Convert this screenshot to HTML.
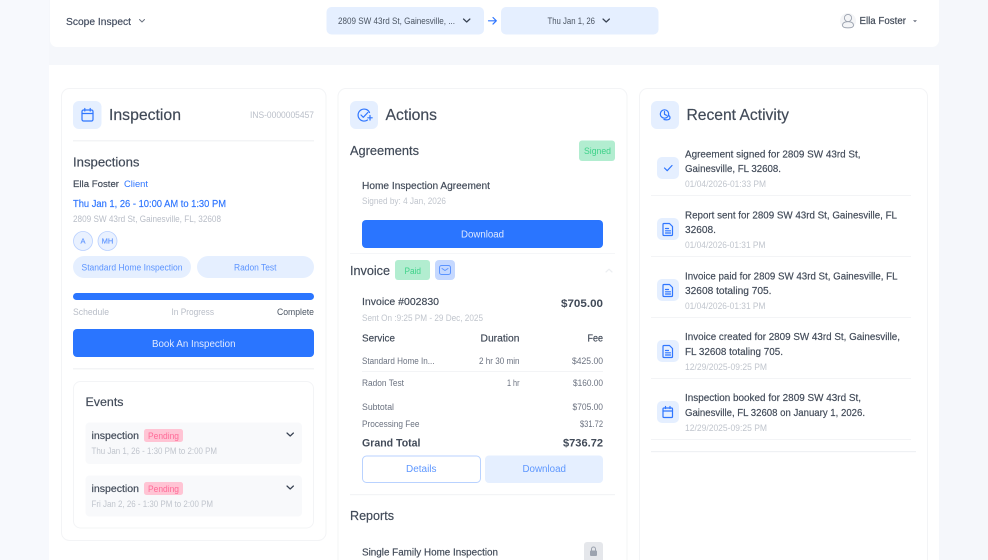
<!DOCTYPE html>
<html lang="en">
<head>
<meta charset="utf-8">
<title>Scope Inspect</title>
<style>
html,body{margin:0;padding:0;width:988px;height:560px;overflow:hidden;background:#f5f7fb}
svg{display:block;filter:blur(.3px)}
text{font-family:"Liberation Sans",sans-serif;white-space:pre}
.m{stroke-width:.18px}
.d{fill:#414a58;stroke:#414a58}
.g{fill:#c0c5cd}
.s{fill:#6b7280}
.b{fill:#2f76ff}
.i{fill:none;stroke:#2f76ff;stroke-width:1.2;stroke-linecap:round;stroke-linejoin:round}
.c{fill:none;stroke:#374151;stroke-width:1.2;stroke-linecap:round;stroke-linejoin:round}
</style>
</head>
<body>
<svg width="988" height="560" viewBox="0 0 988 560" xmlns="http://www.w3.org/2000/svg">
<rect width="988" height="560" fill="#f5f7fb"/>
<rect x="0" y="0" width="49" height="560" fill="#f7f9fd"/>
<rect x="50" y="-10" width="889" height="57" rx="7" fill="#fff"/>
<rect x="49" y="65" width="890" height="495" fill="#fff"/>

<!-- Top bar -->
<text x="66" y="25" font-size="10.5" class="m" fill="#414b5e" stroke="#414b5e" textLength="65" lengthAdjust="spacingAndGlyphs">Scope Inspect</text>
<path d="M139.5 19.5l2.500 2.500 2.500-2.500" fill="none" stroke="#6b7280" stroke-width="1" stroke-linecap="round" stroke-linejoin="round"/>
<rect x="326.5" y="7" width="157.500" height="27.500" rx="5" fill="#e5efff"/>
<text x="338" y="24" font-size="9.5" fill="#4b5563" textLength="117" lengthAdjust="spacingAndGlyphs">2809 SW 43rd St, Gainesville, ...</text>
<path d="M463.500 19l3.200 3 3.200-3" class="c"/>
<path d="M488.500 20.800h7.500M493 17.500l3.300 3.300-3.300 3.300" class="i"/>
<rect x="501" y="7" width="157.500" height="27.500" rx="5" fill="#e5efff"/>
<text x="547.500" y="24" font-size="9.500" fill="#4b5563" textLength="47.500" lengthAdjust="spacingAndGlyphs">Thu Jan 1, 26</text>
<path d="M603 19l3.200 3 3.200-3" class="c"/>
<circle cx="848" cy="21" r="8" fill="#f4f5f7"/>
<circle cx="848" cy="18" r="3.600" fill="none" stroke="#9ca3af" stroke-width=".9"/>
<path d="M842.500 25.500c0-2.600 2.400-3.800 5.500-3.800s5.500 1.200 5.500 3.800c0 1.800-2.400 2.300-5.500 2.300s-5.500-.5-5.500-2.300z" fill="none" stroke="#9ca3af" stroke-width=".9"/>
<text x="859.500" y="24" font-size="10" class="m d" textLength="46.500" lengthAdjust="spacingAndGlyphs">Ella Foster</text>
<path d="M913 20.300h4l-2 2z" fill="#6b7280"/>

<!-- Cards -->
<rect x="61.500" y="88.500" width="264.500" height="452" rx="8" fill="#fff" stroke="#f3f4f6"/>
<rect x="338" y="88.500" width="289" height="490" rx="8" fill="#fff" stroke="#f3f4f6"/>
<rect x="639.500" y="88.500" width="288" height="490" rx="8" fill="#fff" stroke="#f3f4f6"/>

<!-- Card 1 -->
<rect x="73" y="101" width="28.500" height="28" rx="6" fill="#e5efff"/>
<rect x="82" y="110" width="11" height="11" rx="1.500" class="i"/>
<path d="M82 113.500h11M84.800 108.500v2.500M90.200 108.500v2.500" class="i"/>
<text x="109" y="120" font-size="16" class="m" fill="#414a58" stroke="#414a58" textLength="72" lengthAdjust="spacingAndGlyphs">Inspection</text>
<text x="250" y="118" font-size="9" fill="#b9bec8" textLength="64" lengthAdjust="spacingAndGlyphs">INS-0000005457</text>
<rect x="73" y="140" width="241" height="1.500" fill="#f3f4f6"/>
<text x="73" y="166.500" font-size="12.500" class="m d" textLength="66.500" lengthAdjust="spacingAndGlyphs">Inspections</text>
<text x="73" y="187" font-size="9.500" class="m d" textLength="46" lengthAdjust="spacingAndGlyphs">Ella Foster</text>
<text x="124" y="187" font-size="9.500" class="b" textLength="24" lengthAdjust="spacingAndGlyphs">Client</text>
<text x="73" y="207" font-size="10" class="m b" stroke="#2f76ff" textLength="153" lengthAdjust="spacingAndGlyphs">Thu Jan 1, 26 - 10:00 AM to 1:30 PM</text>
<text x="73" y="222" font-size="9" fill="#b8bdc7" textLength="148" lengthAdjust="spacingAndGlyphs">2809 SW 43rd St, Gainesville, FL, 32608</text>
<circle cx="83" cy="241" r="9.500" fill="#e9f1ff" stroke="#b9d0ff" stroke-width=".8"/>
<circle cx="107.500" cy="241" r="9.500" fill="#e9f1ff" stroke="#b9d0ff" stroke-width=".8"/>
<text x="83" y="243.500" font-size="7.500" class="m" fill="#6398ff" stroke="#6398ff" text-anchor="middle">A</text>
<text x="107.500" y="243.500" font-size="7.500" class="m" fill="#6398ff" stroke="#6398ff" text-anchor="middle">MH</text>
<rect x="73" y="256" width="118" height="22" rx="11" fill="#e5efff"/>
<rect x="197" y="256" width="117" height="22" rx="11" fill="#e5efff"/>
<text x="81.500" y="270.500" font-size="9" fill="#5c94ff" textLength="101" lengthAdjust="spacingAndGlyphs">Standard Home Inspection</text>
<text x="234" y="270.500" font-size="9" fill="#5c94ff" textLength="42.500" lengthAdjust="spacingAndGlyphs">Radon Test</text>
<rect x="73" y="293" width="241" height="7" rx="3.500" fill="#2a75ff"/>
<text x="73" y="315" font-size="9" fill="#b8bdc7" textLength="36" lengthAdjust="spacingAndGlyphs">Schedule</text>
<text x="171.500" y="315" font-size="9" fill="#b8bdc7" textLength="42.500" lengthAdjust="spacingAndGlyphs">In Progress</text>
<text x="277" y="315" font-size="9" fill="#4b5563" textLength="37" lengthAdjust="spacingAndGlyphs">Complete</text>
<rect x="73" y="329" width="241" height="28" rx="4" fill="#2a75ff"/>
<text x="152" y="347" font-size="10" fill="#dfe9ff" textLength="83.500" lengthAdjust="spacingAndGlyphs">Book An Inspection</text>
<rect x="73" y="368" width="241" height="1.500" fill="#f3f4f6"/>
<rect x="73.500" y="381.500" width="240" height="146.500" rx="7" fill="#fff" stroke="#f3f4f6"/>
<text x="85.500" y="406" font-size="12" class="m d" textLength="38" lengthAdjust="spacingAndGlyphs">Events</text>

<rect x="85.500" y="422.500" width="216.500" height="41.500" rx="4" fill="#f8f9fb"/>
<text x="91.500" y="439" font-size="10" class="m d" textLength="47.500" lengthAdjust="spacingAndGlyphs">inspection</text>
<rect x="144" y="429" width="39" height="13" rx="2.500" fill="#ffc4d4"/>
<text x="148" y="439" font-size="9" fill="#ff6b98" textLength="31" lengthAdjust="spacingAndGlyphs">Pending</text>
<text x="91.500" y="454" font-size="9" class="g" textLength="125.500" lengthAdjust="spacingAndGlyphs">Thu Jan 1, 26 - 1:30 PM to 2:00 PM</text>
<path d="M287 433l3.200 3 3.200-3" class="c"/>

<rect x="85.500" y="475.500" width="216.500" height="41" rx="4" fill="#f8f9fb"/>
<text x="91.500" y="492" font-size="10" class="m d" textLength="47.500" lengthAdjust="spacingAndGlyphs">inspection</text>
<rect x="144" y="482" width="39" height="13" rx="2.500" fill="#ffc4d4"/>
<text x="148" y="492" font-size="9" fill="#ff6b98" textLength="31" lengthAdjust="spacingAndGlyphs">Pending</text>
<text x="91.500" y="507" font-size="9" class="g" textLength="121.500" lengthAdjust="spacingAndGlyphs">Fri Jan 2, 26 - 1:30 PM to 2:00 PM</text>
<path d="M287 486l3.200 3 3.200-3" class="c"/>

<!-- Card 2 -->
<rect x="350" y="101" width="28" height="28" rx="6" fill="#e5efff"/>
<path d="M369.500 112.500a6 6 0 1 0-2 7.500" class="i"/>
<path d="M361 115l2.300 2.300 4.500-4.800M370 115.500v4.500M367.800 117.800h4.400" class="i"/>
<text x="385.500" y="120" font-size="16" class="m" fill="#414a58" stroke="#414a58" textLength="51.500" lengthAdjust="spacingAndGlyphs">Actions</text>

<text x="350" y="155" font-size="12.500" class="m d" textLength="69" lengthAdjust="spacingAndGlyphs">Agreements</text>
<rect x="579" y="140.500" width="36" height="20.500" rx="3" fill="#b2edd0"/>
<text x="584" y="154" font-size="9" fill="#3fd28a" textLength="27" lengthAdjust="spacingAndGlyphs">Signed</text>
<text x="362" y="189" font-size="10" class="m d" textLength="128" lengthAdjust="spacingAndGlyphs">Home Inspection Agreement</text>
<text x="362" y="204" font-size="9" class="g" textLength="84" lengthAdjust="spacingAndGlyphs">Signed by: 4 Jan, 2026</text>
<rect x="362" y="220" width="241" height="28" rx="4" fill="#2a75ff"/>
<text x="461" y="237.500" font-size="10" fill="#dfe9ff" textLength="43" lengthAdjust="spacingAndGlyphs">Download</text>
<rect x="350" y="253" width="265" height="1" fill="#f5f6f8"/>

<text x="350" y="275" font-size="12.500" class="m d" textLength="40" lengthAdjust="spacingAndGlyphs">Invoice</text>
<rect x="395" y="260" width="35" height="20" rx="3" fill="#b2edd0"/>
<text x="404.500" y="274" font-size="9" fill="#3fd28a" textLength="16.500" lengthAdjust="spacingAndGlyphs">Paid</text>
<rect x="435" y="260" width="20" height="20" rx="4" fill="#c5d8ff"/>
<rect x="439.500" y="265.500" width="11" height="9" rx="2" fill="none" stroke="#5c94ff" stroke-width="1"/>
<path d="M442 268.500l3 2 3-2" fill="none" stroke="#5c94ff" stroke-width="1" stroke-linecap="round" stroke-linejoin="round"/>
<path d="M606 272l3-2.800 3 2.800" fill="none" stroke="#eceef1" stroke-width="1.200" stroke-linecap="round" stroke-linejoin="round"/>

<text x="362" y="305" font-size="10.500" class="m d" textLength="77" lengthAdjust="spacingAndGlyphs">Invoice #002830</text>
<text x="561" y="307" font-size="11" font-weight="700" fill="#414a58" textLength="42" lengthAdjust="spacingAndGlyphs">$705.00</text>
<text x="362" y="321" font-size="9" class="g" textLength="121" lengthAdjust="spacingAndGlyphs">Sent On :9:25 PM - 29 Dec, 2025</text>
<text x="362" y="341.500" font-size="10" class="m d" textLength="33" lengthAdjust="spacingAndGlyphs">Service</text>
<text x="480.500" y="341.500" font-size="10" class="m d" textLength="39" lengthAdjust="spacingAndGlyphs">Duration</text>
<text x="587.500" y="341.500" font-size="10" class="m d" textLength="15.500" lengthAdjust="spacingAndGlyphs">Fee</text>
<text x="362" y="364" font-size="9" class="s" textLength="72.500" lengthAdjust="spacingAndGlyphs">Standard Home In...</text>
<text x="479" y="364" font-size="9" class="s" textLength="40.500" lengthAdjust="spacingAndGlyphs">2 hr 30 min</text>
<text x="572" y="364" font-size="9" class="s" textLength="31" lengthAdjust="spacingAndGlyphs">$425.00</text>
<rect x="362" y="371" width="241" height="1" fill="#f3f4f6"/>
<text x="362" y="386" font-size="9" class="s" textLength="42" lengthAdjust="spacingAndGlyphs">Radon Test</text>
<text x="507" y="386" font-size="9" class="s" textLength="12.500" lengthAdjust="spacingAndGlyphs">1 hr</text>
<text x="573" y="386" font-size="9" class="s" textLength="30" lengthAdjust="spacingAndGlyphs">$160.00</text>
<text x="362" y="410" font-size="9" class="s" textLength="32" lengthAdjust="spacingAndGlyphs">Subtotal</text>
<text x="572.500" y="410" font-size="9" class="s" textLength="30.500" lengthAdjust="spacingAndGlyphs">$705.00</text>
<text x="362" y="427" font-size="9" class="s" textLength="57.500" lengthAdjust="spacingAndGlyphs">Processing Fee</text>
<text x="580" y="427" font-size="9" class="s" textLength="23" lengthAdjust="spacingAndGlyphs">$31.72</text>
<text x="362" y="446.500" font-size="11" font-weight="700" fill="#414a58" textLength="58.500" lengthAdjust="spacingAndGlyphs">Grand Total</text>
<text x="563" y="446.500" font-size="11" font-weight="700" fill="#414a58" textLength="40" lengthAdjust="spacingAndGlyphs">$736.72</text>
<rect x="362.500" y="456" width="118" height="26.500" rx="4" fill="#fff" stroke="#b9d2ff"/>
<text x="406" y="472" font-size="10" fill="#5e97ff" textLength="30.500" lengthAdjust="spacingAndGlyphs">Details</text>
<rect x="485" y="455.500" width="118" height="27.500" rx="4" fill="#e5efff"/>
<text x="522.500" y="472" font-size="10" fill="#5e97ff" textLength="43.500" lengthAdjust="spacingAndGlyphs">Download</text>
<rect x="350" y="494" width="265" height="1.200" fill="#f3f4f6"/>
<text x="350" y="520" font-size="12.500" class="m d" textLength="44" lengthAdjust="spacingAndGlyphs">Reports</text>
<text x="362" y="555.500" font-size="10.500" class="m d" textLength="136" lengthAdjust="spacingAndGlyphs">Single Family Home Inspection</text>
<rect x="584" y="542" width="19" height="24" rx="3" fill="#e5e7eb"/>
<rect x="590" y="550.500" width="7" height="5.500" rx="1" fill="#9ca3af"/>
<path d="M591.500 550.500v-1.500a2 2 0 0 1 4 0v1.500" fill="none" stroke="#9ca3af" stroke-width="1"/>

<!-- Card 3 -->
<rect x="651" y="101" width="28" height="28" rx="6" fill="#e5efff"/>
<circle cx="664.500" cy="114" r="4.200" class="i"/>
<path d="M664.500 111.500v2.800l2 1" class="i"/>
<path d="M664 119.500c3 .8 6 .3 6-1.800 0-1.500-1-2.200-2-2.400" class="i"/>
<text x="686.500" y="120" font-size="16" class="m" fill="#414a58" stroke="#414a58" textLength="102.500" lengthAdjust="spacingAndGlyphs">Recent Activity</text>

<!-- item 1 -->
<rect x="657" y="157" width="22" height="22" rx="5" fill="#e5efff"/>
<path d="M664.500 168l2.700 2.700 4.800-5.200" class="i" stroke-width="1"/>
<text x="685" y="157.500" font-size="10.500" class="m d" textLength="175.500" lengthAdjust="spacingAndGlyphs">Agreement signed for 2809 SW 43rd St,</text>
<text x="685" y="172" font-size="10.500" class="m d" textLength="96" lengthAdjust="spacingAndGlyphs">Gainesville, FL 32608.</text>
<text x="685" y="187" font-size="9" class="g" textLength="81" lengthAdjust="spacingAndGlyphs">01/04/2026-01:33 PM</text>
<rect x="651" y="195" width="260" height="1" fill="#f3f4f6"/>

<!-- item 2 -->
<rect x="657" y="218" width="22" height="22" rx="5" fill="#e5efff"/>
<path d="M664 223.500h5.500l3 3v8a1 1 0 0 1-1 1h-7.500a1 1 0 0 1-1-1v-10a1 1 0 0 1 1-1z" class="i"/>
<path d="M665.500 228.500h3M665.500 230.800h5M665.500 233h5" class="i" stroke-width="1"/>
<text x="685" y="218.500" font-size="10.500" class="m d" textLength="212" lengthAdjust="spacingAndGlyphs">Report sent for 2809 SW 43rd St, Gainesville, FL</text>
<text x="685" y="233" font-size="10.500" class="m d" textLength="31" lengthAdjust="spacingAndGlyphs">32608.</text>
<text x="685" y="248" font-size="9" class="g" textLength="80.500" lengthAdjust="spacingAndGlyphs">01/04/2026-01:31 PM</text>
<rect x="651" y="256" width="260" height="1" fill="#f3f4f6"/>

<!-- item 3 -->
<rect x="657" y="279" width="22" height="22" rx="5" fill="#e5efff"/>
<path d="M664 284.500h5.500l3 3v8a1 1 0 0 1-1 1h-7.500a1 1 0 0 1-1-1v-10a1 1 0 0 1 1-1z" class="i"/>
<path d="M665.500 289.500h3M665.500 291.800h5M665.500 294h5" class="i" stroke-width="1"/>
<text x="685" y="279.500" font-size="10.500" class="m d" textLength="212.500" lengthAdjust="spacingAndGlyphs">Invoice paid for 2809 SW 43rd St, Gainesville, FL</text>
<text x="685" y="294" font-size="10.500" class="m d" textLength="86.500" lengthAdjust="spacingAndGlyphs">32608 totaling 705.</text>
<text x="685" y="309" font-size="9" class="g" textLength="80.500" lengthAdjust="spacingAndGlyphs">01/04/2026-01:31 PM</text>
<rect x="651" y="317" width="260" height="1" fill="#f3f4f6"/>

<!-- item 4 -->
<rect x="657" y="340" width="22" height="22" rx="5" fill="#e5efff"/>
<path d="M664 345.500h5.500l3 3v8a1 1 0 0 1-1 1h-7.500a1 1 0 0 1-1-1v-10a1 1 0 0 1 1-1z" class="i"/>
<path d="M665.500 350.500h3M665.500 352.800h5M665.500 355h5" class="i" stroke-width="1"/>
<text x="685" y="340" font-size="10.500" class="m d" textLength="215" lengthAdjust="spacingAndGlyphs">Invoice created for 2809 SW 43rd St, Gainesville,</text>
<text x="685" y="355" font-size="10.500" class="m d" textLength="98" lengthAdjust="spacingAndGlyphs">FL 32608 totaling 705.</text>
<text x="685" y="370" font-size="9" class="g" textLength="82" lengthAdjust="spacingAndGlyphs">12/29/2025-09:25 PM</text>
<rect x="651" y="378" width="260" height="1" fill="#f3f4f6"/>

<!-- item 5 -->
<rect x="657" y="401" width="22" height="22" rx="5" fill="#e5efff"/>
<rect x="663" y="408" width="9.500" height="9.500" rx="1" class="i"/>
<path d="M663 411h9.500M665.500 406.500v2M670 406.500v2" class="i"/>
<text x="685" y="401" font-size="10.500" class="m d" textLength="176" lengthAdjust="spacingAndGlyphs">Inspection booked for 2809 SW 43rd St,</text>
<text x="685" y="416" font-size="10.500" class="m d" textLength="180" lengthAdjust="spacingAndGlyphs">Gainesville, FL 32608 on January 1, 2026.</text>
<text x="685" y="431" font-size="9" class="g" textLength="82" lengthAdjust="spacingAndGlyphs">12/29/2025-09:25 PM</text>
<rect x="651" y="439" width="260" height="1" fill="#f3f4f6"/>
<rect x="651" y="451" width="265" height="1.200" fill="#eff1f4"/>
</svg>
</body>
</html>
